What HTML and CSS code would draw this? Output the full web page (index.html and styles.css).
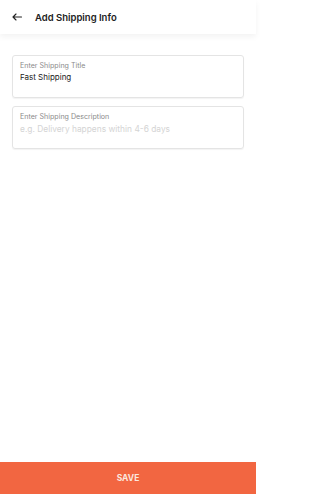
FILE: index.html
```html
<!DOCTYPE html>
<html>
<head>
<meta charset="utf-8">
<link rel="stylesheet" href="styles.css">
</head>
<body>
<div class="app">
  <header class="topbar">
    <svg class="back" width="10" height="8" viewBox="0 0 10 8"><path d="M9.5 4H1M4 1L1 4l3 3" fill="none" stroke="#222" stroke-width="1.1" stroke-linecap="round" stroke-linejoin="round"/></svg>
    <h1 class="title">Add Shipping Info</h1>
  </header>
  <main class="content">
    <div class="field">
      <label class="label">Enter Shipping Title</label>
      <div class="value">Fast Shipping</div>
    </div>
    <div class="field">
      <label class="label">Enter Shipping Description</label>
      <div class="placeholder">e.g. Delivery happens within 4-6 days</div>
    </div>
  </main>
  <button class="save">SAVE</button>
</div>
</body>
</html>
```
FILE: styles.css
```css
* { box-sizing: border-box; }
html, body { margin: 0; padding: 0; }
body { font-family: Inter, "Noto Sans", sans-serif; background: #fff; }
.app { width: 256px; height: 494px; display: flex; flex-direction: column; }
.topbar { height: 34px; flex: none; display: flex; align-items: center; padding-left: 12px; box-shadow: 0 3px 6px rgba(0,0,0,0.05); }
.back { margin-right: 13px; }
.title { margin: 0; font-size: 9.5px; font-weight: 600; color: #222; }
.content { flex: 1; padding: 21px 12px 0; display: flex; flex-direction: column; gap: 8px; }
.field { height: 43px; border: 1px solid #e4e4e4; border-radius: 3px; padding: 5px 7px; box-shadow: 0 1px 1px rgba(0,0,0,0.05); }
.label { display: block; font-size: 7.1px; color: #8a8a8a; line-height: 9px; }
.value { font-size: 8px; color: #222; margin-top: 2px; }
.placeholder { font-size: 8.4px; color: #d4d4d4; margin-top: 3px; }
.save { height: 32px; flex: none; border: 0; background: #f26641; color: #fbe7df; font-family: inherit; font-size: 8.5px; font-weight: 700; width: 100%; }
```
